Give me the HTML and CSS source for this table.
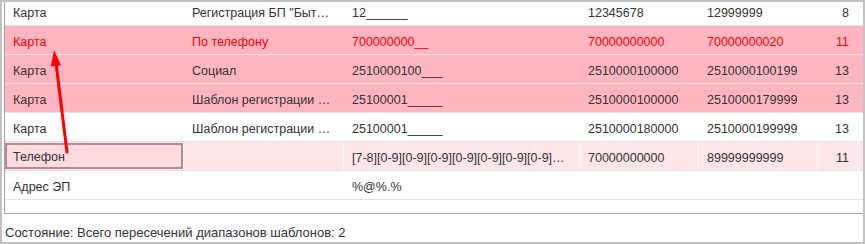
FILE: index.html
```html
<!DOCTYPE html>
<html lang="ru">
<head>
<meta charset="utf-8">
<title>Шаблоны</title>
<link rel="stylesheet" href="styles.css">
</head>
<body>
<div class="window">
  <div class="grid-frame">
    <div class="grid">
      <div class="row">
        <div class="cell">Карта</div>
        <div class="cell">Регистрация БП "Быт…</div>
        <div class="cell">12______</div>
        <div class="cell">12345678</div>
        <div class="cell">12999999</div>
        <div class="cell num">8</div>
        <div class="cell"></div>
      </div>
      <div class="row hl red">
        <div class="cell">Карта</div>
        <div class="cell">По телефону</div>
        <div class="cell">700000000__</div>
        <div class="cell">70000000000</div>
        <div class="cell">70000000020</div>
        <div class="cell num">11</div>
        <div class="cell"></div>
      </div>
      <div class="row hl">
        <div class="cell">Карта</div>
        <div class="cell">Социал</div>
        <div class="cell">2510000100___</div>
        <div class="cell">2510000100000</div>
        <div class="cell">2510000100199</div>
        <div class="cell num">13</div>
        <div class="cell"></div>
      </div>
      <div class="row hl">
        <div class="cell">Карта</div>
        <div class="cell">Шаблон регистрации …</div>
        <div class="cell">25100001_____</div>
        <div class="cell">2510000100000</div>
        <div class="cell">2510000179999</div>
        <div class="cell num">13</div>
        <div class="cell"></div>
      </div>
      <div class="row">
        <div class="cell">Карта</div>
        <div class="cell">Шаблон регистрации …</div>
        <div class="cell">25100001_____</div>
        <div class="cell">2510000180000</div>
        <div class="cell">2510000199999</div>
        <div class="cell num">13</div>
        <div class="cell"></div>
      </div>
      <div class="row current">
        <div class="cell selected">Телефон</div>
        <div class="cell"></div>
        <div class="cell">[7-8][0-9][0-9][0-9][0-9][0-9][0-9][0-9]…</div>
        <div class="cell">70000000000</div>
        <div class="cell">89999999999</div>
        <div class="cell num">11</div>
        <div class="cell"></div>
      </div>
      <div class="row">
        <div class="cell">Адрес ЭП</div>
        <div class="cell"></div>
        <div class="cell">%@%.%</div>
        <div class="cell"></div>
        <div class="cell"></div>
        <div class="cell num"></div>
        <div class="cell"></div>
      </div>
    </div>
  </div>
  <div class="status">Состояние: Всего пересечений диапазонов шаблонов: 2</div>
  <svg class="arrow" width="865" height="244" viewBox="0 0 865 244">
    <line x1="67" y1="152" x2="56" y2="63" stroke="#ff0000" stroke-width="3" stroke-linecap="round"/>
    <polygon points="54,50 60.9,65.3 50.9,66.5" fill="#ff0000"/>
  </svg>
</div>
</body>
</html>
```
FILE: styles.css
```css
html, body {
  margin: 0;
  padding: 0;
  background: #ffffff;
}

.window {
  position: relative;
  box-sizing: border-box;
  width: 865px;
  height: 244px;
  border: 2px solid #c2c2c2;
  background: #ffffff;
  font-family: "Liberation Sans", Arial, sans-serif;
  font-size: 12.5px;
  color: #333333;
  display: flex;
  flex-direction: column;
}

.grid-frame {
  margin-left: 2px;
  height: 211px;
  border-left: 1px solid #a3a3a3;
  border-bottom: 1px solid #a3a3a3;
  overflow: hidden;
}

.grid {
  margin-top: -5px;
}

.row {
  display: grid;
  grid-template-columns: 178px 160px 236px 119px 119px 40px 1fr;
  grid-template-rows: 28px;
  height: 28px;
  border-bottom: 1px solid #e2e2e2;
}

.row.hl {
  background: #ffb6c1;
}

.row.red {
  color: #ff0000;
}

.row.current {
  background: #ffe6ea;
}

.cell {
  box-sizing: border-box;
  height: 28px;
  padding: 2px 8px 0 8px;
  line-height: 28px;
  white-space: nowrap;
  overflow: hidden;
  border-left: 1px solid transparent;
}

.cell:first-child {
  border-left: none;
}

.row.current .cell {
  border-left-color: #ffffff;
}

.row.current .cell:first-child {
  border-left: none;
}

.cell.num {
  text-align: right;
}

.cell.selected {
  background: #ffdadf;
  box-shadow: inset 0 0 0 2px #b9888f;
  margin: 1px 0;
  height: 26px;
  padding-top: 1px;
  line-height: 27px;
}

.status {
  padding: 10px 0 0 3px;
  line-height: 18px;
  font-size: 13px;
  white-space: nowrap;
}

.arrow {
  position: absolute;
  left: -2px;
  top: -2px;
  pointer-events: none;
}
```
